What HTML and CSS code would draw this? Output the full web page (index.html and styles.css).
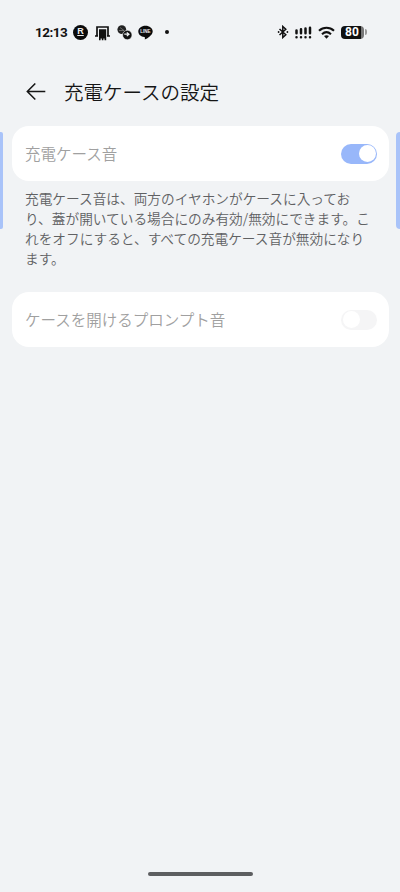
FILE: index.html
```html
<!DOCTYPE html>
<html lang="ja">
<head>
<meta charset="utf-8">
<meta name="viewport" content="width=device-width, initial-scale=1">
<title>充電ケースの設定</title>
<link rel="stylesheet" href="styles.css">
</head>
<body>
<div class="screen">
  <div class="status">
    <div class="status-left">
      <span class="time">12:13</span>
      <span class="rakuten">R</span>
      <svg class="gate" width="15" height="16" viewBox="0 0 15 16"><path d="M2 11V2h11v9" fill="none" stroke="#111" stroke-width="1.700"/><path d="M4 4.200h7.200v11H9.500V13.500H8.400v1.700H6.800v-1.700H5.600v1.700H4z" fill="#111"/><path d="M0 11h3M12 11h3" stroke="#111" stroke-width="1.500"/></svg>
      <svg class="globes" width="15" height="15" viewBox="0 0 15 15"><circle cx="4.800" cy="4.600" r="4.400" fill="#222"/><path d="M2 5.500h5M3 2.500l4 3" stroke="#999" stroke-width=".6"/><circle cx="10.300" cy="10" r="4.700" fill="#111" stroke="#f1f3f5" stroke-width=".6"/><path d="M7.300 9.200h4M9.800 7.400l2.200 1.800-2.200 1.900" fill="none" stroke="#f1f3f5" stroke-width="1.200"/></svg>
      <span class="line-icon"><svg width="15" height="15" viewBox="0 0 15 15"><path d="M7.500.7C3.500.7.3 3.200.3 6.500c0 2.900 2.500 5.100 6 5.600.5.100.7.500.6 1l-.1 1.500c2.500-1.100 7.900-4.500 7.900-8.100C14.700 3.200 11.500.7 7.500.7z" fill="#0b0b0b"/></svg><span class="line-text">LINE</span></span>
      <span class="dot"></span>
    </div>
    <div class="status-right">
      <svg class="bt" width="12" height="14" viewBox="0 0 12 14"><path d="M2.500 4l6.300 5.800L5.800 12.500v-11l3 2.700L2.500 10" fill="none" stroke="#111" stroke-width="1.500"/><circle cx="1.600" cy="7" r=".9" fill="#111"/><circle cx="10.400" cy="7" r=".9" fill="#111"/></svg>
      <svg class="signal" width="17" height="13" viewBox="0 0 17 13"><g stroke="#111" stroke-width="2.500" stroke-linecap="round"><path d="M1.500 4.500v2.800M6 3.300v4M10.500 2.500v4.800M15 1.800v5.500M1.500 11.300h.01M6 11.300h.01M10.500 11.300h.01M15 11.300h.01"/></g></svg>
      <svg class="wifi" width="17" height="13" viewBox="0 0 17 13"><g fill="none" stroke="#111" stroke-width="2.100"><path d="M1 4.700c4.300-4 10.700-4 15 0M4 8.200c2.700-2.400 6.300-2.400 9 0"/></g><path d="M6 10.100c1.600-1.200 3.400-1.200 5 0L8.500 12.700z" fill="#111"/></svg>
      <span class="battery"><span class="battery-body">80</span><span class="battery-tip"></span></span>
    </div>
  </div>
  <header class="header">
    <svg width="20" height="18" viewBox="0 0 20 18"><path d="M19.300 8.500H1.300M9.300.5l-8 8 8 8" fill="none" stroke="#151515" stroke-width="1.500"/></svg>
    <h1>充電ケースの設定</h1>
  </header>
  <main>
    <section class="card"><span class="label">充電ケース音</span><span class="switch on"><i></i></span></section>
    <p class="note">充電ケース音は、両方のイヤホンがケースに入ってお<br>り、蓋が開いている場合にのみ有効/無効にできます。こ<br>れをオフにすると、すべての充電ケース音が無効になり<br>ます。</p>
    <section class="card"><span class="label">ケースを開けるプロンプト音</span><span class="switch"><i></i></span></section>
  </main>
  <div class="edge edge-left"></div>
  <div class="edge edge-right"></div>
  <div class="home"></div>
</div>
</body>
</html>
```
FILE: styles.css
```css
* { box-sizing: border-box; }
body { margin: 0; background: #f1f3f5; font-family: "Noto Sans CJK JP", sans-serif; font-weight: 350; }
.screen { position: relative; display: flex; flex-direction: column; width: 400px; height: 892px; overflow: hidden; background: #f1f3f5; }
.status { display: flex; justify-content: space-between; height: 64px; padding: 0 33px 0 35px; }
.status-left, .status-right { display: flex; align-items: center; }
.time { width: 38px; font: 700 13.500px/20px Roboto, sans-serif; letter-spacing: -.5px; color: #111; }
.rakuten { width: 15px; height: 15px; border-radius: 50%; background: #0b0b0b; color: #eee; font: 700 9px/13px "Liberation Sans", sans-serif; text-align: center; text-decoration: underline; }
.gate { margin: 2px 0 0 7px; }
.globes { margin-left: 7px; }
.line-icon { position: relative; display: flex; margin-left: 6px; }
.line-text { position: absolute; left: 0; top: 3px; width: 15px; color: #eee; text-align: center; font: 700 4.500px/7px "Liberation Sans", sans-serif; }
.dot { width: 4px; height: 4px; margin-left: 12px; border-radius: 50%; background: #111; }
.signal { margin-left: 6px; }
.wifi { margin-left: 6px; }
.battery { display: flex; align-items: center; margin-left: 6px; }
.battery-body { width: 23px; height: 13px; border-radius: 4px; background: linear-gradient(90deg, #111 86%, #777 86%); color: #fff; font: 700 12px/13px Roboto, sans-serif; text-align: center; padding-right: 1px; }
.battery-tip { width: 2px; height: 6px; margin-left: 1px; border-radius: 0 2px 2px 0; background: #999; }
.header { display: flex; align-items: center; height: 56px; padding-left: 26px; gap: 18px; margin-bottom: 6px; }
h1 { margin: 0; font-size: 19.500px; line-height: 28px; font-weight: 350; color: #151515; }
.card { display: flex; align-items: center; justify-content: space-between; height: 55px; margin: 0 11px 0 12px; padding: 0 12px 0 13px; border-radius: 17px; background: #fff; color: #a0a0a0; font-size: 15.500px; }
.label { padding-bottom: 2px; }
.switch { display: flex; width: 36px; height: 20px; padding: 1.500px; border-radius: 10px; background: #f5f5f6; }
.switch i { width: 17px; height: 17px; border-radius: 50%; background: #fff; }
.switch.on { justify-content: flex-end; background: #98b7fa; }
.note { margin: 7px 0 24px 25px; font-size: 13.680px; line-height: 20px; color: #606163; white-space: nowrap; }
.edge { position: absolute; top: 132px; height: 97px; background: #a9c3f9; }
.edge-left { left: 0; width: 3px; border-radius: 0 2px 2px 0; }
.edge-right { right: 0; width: 4px; border-radius: 4px 0 0 4px; }
.home { width: 105px; height: 4px; margin: auto auto 16px 148px; border-radius: 2px; background: #5d5e60; }
```
